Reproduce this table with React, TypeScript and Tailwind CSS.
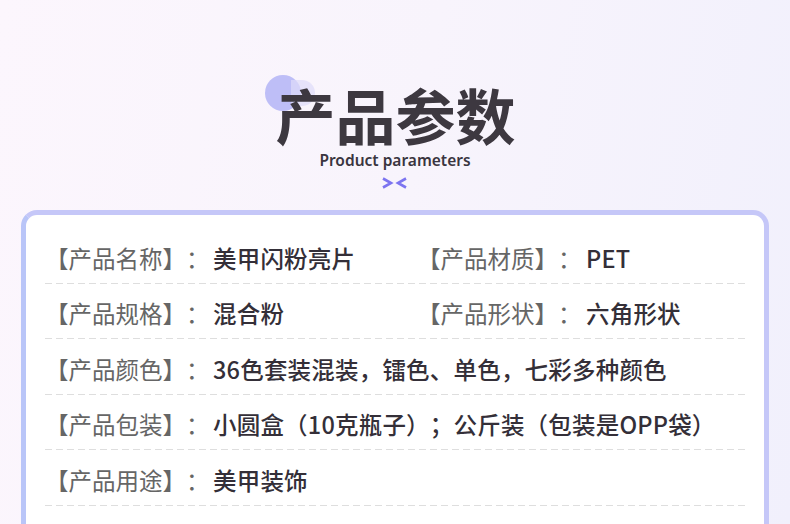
import React from "react";

const cjk = { fontFamily: '"Noto Sans CJK SC", "Noto Sans", sans-serif' };

type Cell = { label: string; value: string };
const rows: Cell[][] = [
  [
    { label: "【产品名称】：", value: "美甲闪粉亮片" },
    { label: "【产品材质】：", value: "PET" },
  ],
  [
    { label: "【产品规格】：", value: "混合粉" },
    { label: "【产品形状】：", value: "六角形状" },
  ],
  [{ label: "【产品颜色】：", value: "36色套装混装，镭色、单色，七彩多种颜色" }],
  [{ label: "【产品包装】：", value: "小圆盒（10克瓶子）；公斤装（包装是OPP袋）" }],
  [{ label: "【产品用途】：", value: "美甲装饰" }],
];

function Item({ c, flexible, second }: { c: Cell; flexible?: boolean; second?: boolean }) {
  return (
    <div className={flexible ? "flex flex-1 items-center" : "flex w-[372px] shrink-0 items-center"}>
      <span
        className={
          (second ? "w-[169px]" : "w-[168px]") +
          " shrink-0 whitespace-nowrap text-[#666666] [text-spacing-trim:space-all]"
        }
      >
        {c.label}
      </span>
      <span className="font-medium text-[#342f38] whitespace-nowrap tracking-[0.2px] [text-spacing-trim:space-all]">
        {c.value}
      </span>
    </div>
  );
}

export default function App() {
  return (
    <div
      className="w-[790px] h-[524px] overflow-hidden bg-[linear-gradient(100deg,#fcf6fd_0%,#f8f4fc_50%,#f1f0fc_100%)]"
      style={cjk}
    >
      <div className="flex flex-col items-center pt-[84px]">
        <div className="relative">
          <div className="absolute left-[-10px] top-[-9px] h-[36px] w-[36px] rounded-full bg-[#bebef7]" />
          <div className="absolute left-[16px] top-[-4px] h-[26px] w-[24px] rounded-r-full bg-[#dedcfa] opacity-70" />
          <h1 className="relative text-[60px] leading-[60px] font-bold text-[#3d3840] pl-[1px]">产品参数</h1>
        </div>
        <div
          className="mt-[6px] text-[15.5px] leading-[20px] font-semibold text-[#3a3540]"
          style={{ fontFamily: '"Noto Sans", "Open Sans", sans-serif' }}
        >
          Product parameters
        </div>
        <svg className="mt-[6px]" width="28" height="14" viewBox="0 0 28 14">
          <path d="M2 2.5 L10 7 L2 11.5" fill="none" stroke="#7c74f0" strokeWidth="2.6" strokeLinejoin="miter" />
          <path d="M25 2.5 L17 7 L25 11.5" fill="none" stroke="#7c74f0" strokeWidth="2.6" strokeLinejoin="miter" />
        </svg>
      </div>

      <div className="mx-[21px] mt-[20px] h-[340px] rounded-[16px] border-[5px] border-[#c5c7f8] border-l-[#b9c5f8] bg-white px-[19px] pt-[13px]">
        {rows.map((r, i) => (
          <div key={i} className="flex flex-col h-[55.5px]">
            <div className="flex flex-1 items-end pb-[13px] text-[23.5px] leading-[24px]">
              {r.length === 2 ? (
                <>
                  <Item c={r[0]} />
                  <Item c={r[1]} flexible second />
                </>
              ) : (
                <Item c={r[0]} flexible />
              )}
            </div>
            <div className="h-px w-full bg-[linear-gradient(to_right,#dedede_62%,transparent_62%)] bg-[length:11px_1px] bg-repeat-x" />
          </div>
        ))}
      </div>
    </div>
  );
}
